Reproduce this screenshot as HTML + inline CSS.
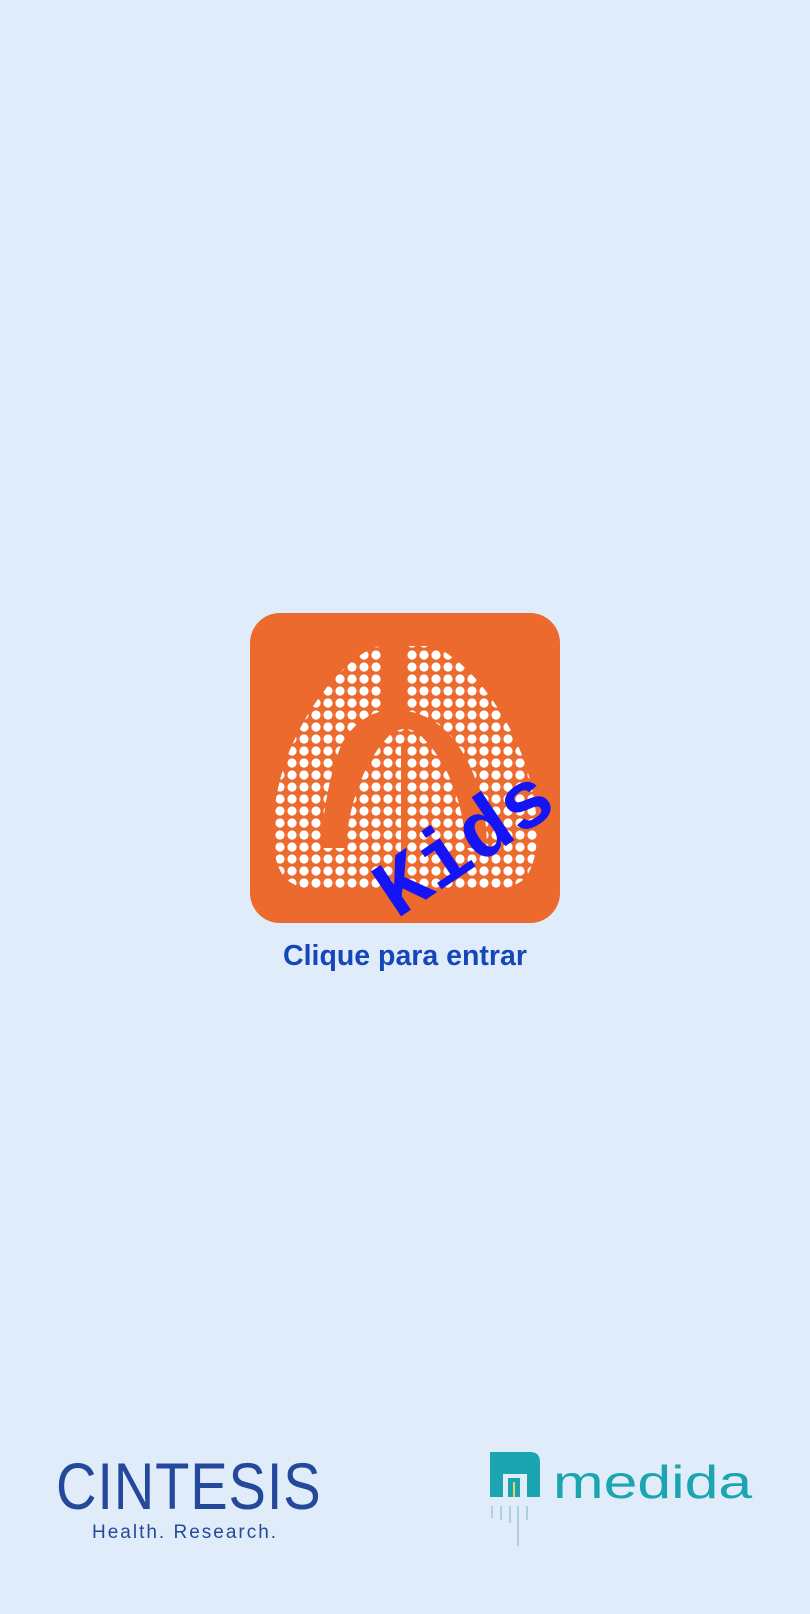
<!DOCTYPE html>
<html><head><meta charset="utf-8"><style>
html,body{margin:0;padding:0}
body{width:810px;height:1614px;background:#e1ecfb;position:relative;overflow:hidden;font-family:"Liberation Sans",sans-serif}
.icon{position:absolute;left:250px;top:613px;width:310px;height:310px;border-radius:30px;background:#ec6a2e;overflow:hidden}
.kids{position:absolute;left:112px;top:255px;font-family:"Liberation Mono",monospace;font-weight:bold;font-size:82px;color:#1414f5;transform:rotate(-34deg);transform-origin:0 0;line-height:1;white-space:nowrap}
.clique{position:absolute;left:0;width:810px;top:940px;text-align:center;font-weight:bold;font-size:28.5px;color:#1547b8}
.cint{position:absolute;left:56px;top:1453px;font-size:66px;color:#25499a;transform:scaleX(0.85);transform-origin:0 0;line-height:1;letter-spacing:1px}
.hr{position:absolute;left:92px;top:1522px;font-size:19px;color:#25499a;letter-spacing:2px}
.med{position:absolute;left:553px;top:1459px;font-size:46px;color:#1ba5b0;line-height:1;transform:scaleX(1.32);transform-origin:0 0}
</style></head><body>
<div class="icon">
<svg width="310" height="310" viewBox="0 0 310 310">
<defs>
<pattern id="d" width="12" height="12" patternUnits="userSpaceOnUse">
<circle cx="6" cy="6" r="4.6" fill="#fff"/>
</pattern>
<mask id="m">
<path d="M133,33 C110,33 60,80 35,150 C20,195 18,245 35,265 C50,280 80,278 110,276 L200,276 C230,278 260,280 275,265 C292,245 290,195 275,150 C250,80 200,33 177,33 Z" fill="#fff"/>
<path d="M133,20 L157,20 L157,98 C185,102 210,125 225,165 C235,195 238,220 236,235 L216,235 C214,195 200,150 170,122 C160,114 150,114 140,122 C112,150 98,195 96,235 L72,235 C72,205 78,165 92,130 C105,108 122,100 133,98 Z" fill="#000"/>
<rect x="151" y="132" width="5" height="146" fill="#000"/>
</mask>
</defs>
<rect width="310" height="310" fill="url(#d)" mask="url(#m)"/>
</svg>
<div class="kids">Kids</div>
</div>
<div class="clique">Clique para entrar</div>
<div class="cint">CINTESIS</div>
<div class="hr">Health. Research.</div>
<svg style="position:absolute;left:485px;top:1448px" width="70" height="100">
<path d="M5,4 H45 Q55,4 55,14 V49 H42 V26 H18 V49 H5 Z" fill="#1ba5b0"/>
<rect x="23" y="30" width="12" height="19" fill="#1ba5b0"/>
<rect x="28" y="34" width="2" height="15" fill="#e6d36a"/>
<g stroke="#9cc8d0" stroke-width="1.5">
<line x1="7" y1="58" x2="7" y2="70"/><line x1="16" y1="58" x2="16" y2="72"/><line x1="25" y1="58" x2="25" y2="75"/><line x1="33" y1="58" x2="33" y2="98"/><line x1="42" y1="58" x2="42" y2="72"/>
</g>
</svg>
<div class="med">medida</div>
</body></html>
